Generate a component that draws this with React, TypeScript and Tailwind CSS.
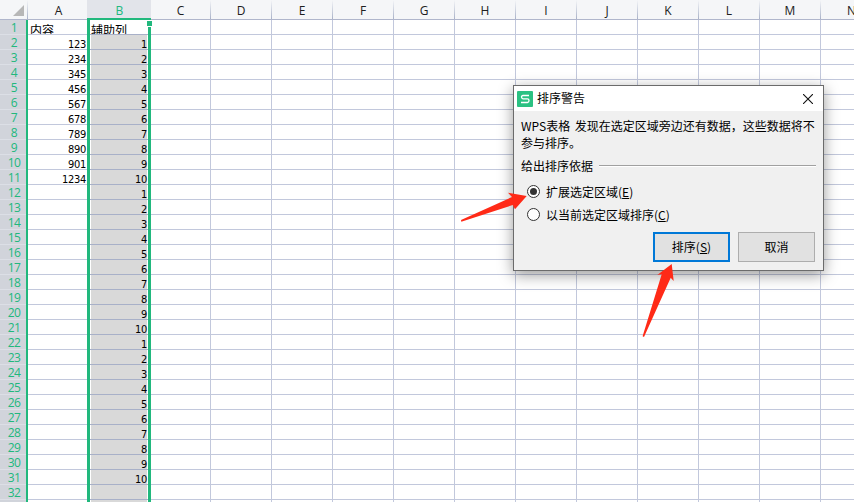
import React from 'react';

const rows = Array.from({ length: 33 }, (_, i) => i + 1);
const columns = ['D', 'E', 'F', 'G', 'H', 'I', 'J', 'K', 'L', 'M'];
const contents = ['内容', '123', '234', '345', '456', '567', '678', '789', '890', '901', '1234'];

function helperValue(row: number) {
  if (row === 1) return '辅助列';
  if (row > 31) return '';
  return String(((row - 2) % 10) + 1);
}

function Divider() {
  return <div className="h-[19px] w-px shrink-0 bg-linear-to-b from-[#f5f6f8] to-[#a9b2c8]" />;
}

function HeaderCell({ label }: { label: string }) {
  return (
    <div className="flex h-[19px] w-[61px] shrink-0">
      <span className="flex-1 text-center">{label}</span>
      <Divider />
    </div>
  );
}

function ColumnHeaders() {
  return (
    <div className="flex h-5 border-b border-[#b0b6cc] bg-[#f5f6f8] font-['Open_Sans','Noto_Sans',sans-serif] text-[12px] leading-[21px] text-[#202020]">
      <div className="flex h-[19px] w-7 shrink-0 justify-end">
        <svg className="mt-[5px] mr-[3px] shrink-0" width="11" height="11" viewBox="0 0 11 11">
          <path d="M11 0V11H0Z" fill="#b7b7b7" />
        </svg>
        <Divider />
      </div>
      <div className="w-[59px] shrink-0 pl-[2px] text-center">A</div>
      <div className="h-5 w-16 shrink-0 border-b-2 border-[#21b87d] bg-[#e2e4ea] pl-px text-center text-[#21b87d]">B</div>
      <div className="flex h-[19px] w-[60px] shrink-0">
        <span className="flex-1 text-center">C</span>
        <Divider />
      </div>
      {columns.map((c) => (
        <HeaderCell key={c} label={c} />
      ))}
      <div className="w-[61px] shrink-0 text-center">N</div>
    </div>
  );
}

const labelText = "font-['Noto_Sans_CJK_SC',sans-serif] text-[12px] leading-[19px]";
const numberText =
  "text-right font-['DejaVu_Sans_Condensed','DejaVu_Sans',sans-serif] font-stretch-condensed text-[11px] leading-[19px] tracking-[-0.3px]";

function Row({ row }: { row: number }) {
  const first = row === 1;
  return (
    <div className="flex h-[15px]">
      <div className="h-[15px] w-7 shrink-0 border-r-2 border-[#21b87d] bg-[#d1d4db]">
        <div className="h-[15px] border-b border-b-[#dcdfe6] pl-[2px] text-center font-['Open_Sans','Noto_Sans',sans-serif] text-[12px] leading-[15px] tracking-[-0.5px] text-[#21b87d]">
          {row}
        </div>
      </div>
      <div className="h-[15px] w-[59px] shrink-0 overflow-hidden border-b border-[#c2c8dc] pr-[1px] text-black">
        <div className={first ? `pl-[2px] ${labelText}` : numberText}>{contents[row - 1]}</div>
      </div>
      <div className="h-[15px] w-16 shrink-0 border-x-[3px] border-[#21b87d]">
        <div
          className={
            first
              ? 'h-[15px] overflow-hidden border-b border-[#a8b0c8] bg-white text-black'
              : 'h-[15px] overflow-hidden border-b border-[#a8b0c8] px-px text-black'
          }
        >
          <div className={first ? `pl-[1px] ${labelText}` : `h-[14px] bg-[#d9d9d9] ${numberText}`}>{helperValue(row)}</div>
        </div>
      </div>
      <div className="h-[15px] w-[60px] shrink-0 border-r border-b border-[#c2c8dc]" />
      {columns.map((c) => (
        <div key={c} className="h-[15px] w-[61px] shrink-0 border-r border-b border-[#c2c8dc]" />
      ))}
      <div className="h-[15px] flex-1 border-b border-[#c2c8dc]" />
    </div>
  );
}

function Option({ label, accel, checked }: { label: string; accel: string; checked?: boolean }) {
  return (
    <div className="flex h-[23px] items-center">
      <span className="mr-[6px] flex h-[13px] w-[13px] items-center justify-center rounded-full border border-[#333] bg-white">
        {checked && <span className="h-[7px] w-[7px] rounded-full bg-[#333]" />}
      </span>
      <span>
        {label}(<u className="underline-offset-1">{accel}</u>)
      </span>
    </div>
  );
}

function SortDialog() {
  return (
    <div className="absolute top-[85px] left-[513px] h-[186px] w-[311px] border border-[#6b6b6b] bg-[#f0f0f0] font-['Noto_Sans_CJK_SC',sans-serif] text-[12px] text-black shadow-[0_4px_14px_rgba(0,0,0,0.4)]">
      <div className="flex h-[25px] items-center bg-white pr-[10px] pl-[3px]">
        <svg width="16" height="16" viewBox="0 0 16 16">
          <rect width="16" height="16" rx="1" fill="#2bc182" />
          <path d="M12 4.5H6Q4.5 4.5 4.5 6T6 7.8H10.5Q12 7.8 12 9.6T10.5 11.5H4" fill="none" stroke="#fff" strokeWidth="1.3" />
        </svg>
        <span className="ml-[4px] flex-1 pb-[2px]">排序警告</span>
        <svg width="10" height="10" viewBox="0 0 10 10">
          <path d="M0 0L10 10M10 0L0 10" stroke="#111" strokeWidth="1.1" />
        </svg>
      </div>
      <div className="px-[7px] pt-[6px]">
        <p className="leading-[17px] whitespace-nowrap [word-spacing:2px]">
          WPS表格 发现在选定区域旁边还有数据，这些数据将不
          <br />
          参与排序。
        </p>
        <div className="mt-[6px] flex h-[18px] items-center">
          <span className="mr-[6px] leading-[18px]">给出排序依据</span>
          <span className="mb-[1px] h-[2px] flex-1 border-t border-[#a0a0a0] bg-white" />
        </div>
      </div>
      <div className="mt-[5px] pl-[13px]">
        <Option label="扩展选定区域" accel="E" checked />
        <Option label="以当前选定区域排序" accel="C" />
      </div>
      <div className="mt-[6px] flex justify-end gap-2 pr-2">
        <button className="h-[30px] w-[77px] border-2 border-[#0078d7] bg-[#e1e1e1]">
          排序(<u className="underline-offset-1">S</u>)
        </button>
        <button className="h-[30px] w-[77px] border border-[#adadad] bg-[#e1e1e1]">取消</button>
      </div>
    </div>
  );
}

export default function App() {
  return (
    <div className="relative h-[502px] w-[854px] overflow-hidden bg-white">
      <ColumnHeaders />
      {rows.map((r) => (
        <Row key={r} row={r} />
      ))}
      <div className="absolute top-5 left-[146px] h-[7px] w-[7px] border border-white bg-[#21b87d]" />
      <SortDialog />
      <svg className="pointer-events-none absolute inset-0" width="854" height="502" viewBox="0 0 854 502">
        <g fill="#ff2a17">
          <path d="M461 220L512 197L508 192.7L526.7 196L515 209.3L512.7 205L461.3 221.8Z" />
          <path d="M671.7 264L673.7 281L670.7 277.7L644 337L642.6 336.3L661.7 274.3L657.3 275Z" />
        </g>
      </svg>
    </div>
  );
}
